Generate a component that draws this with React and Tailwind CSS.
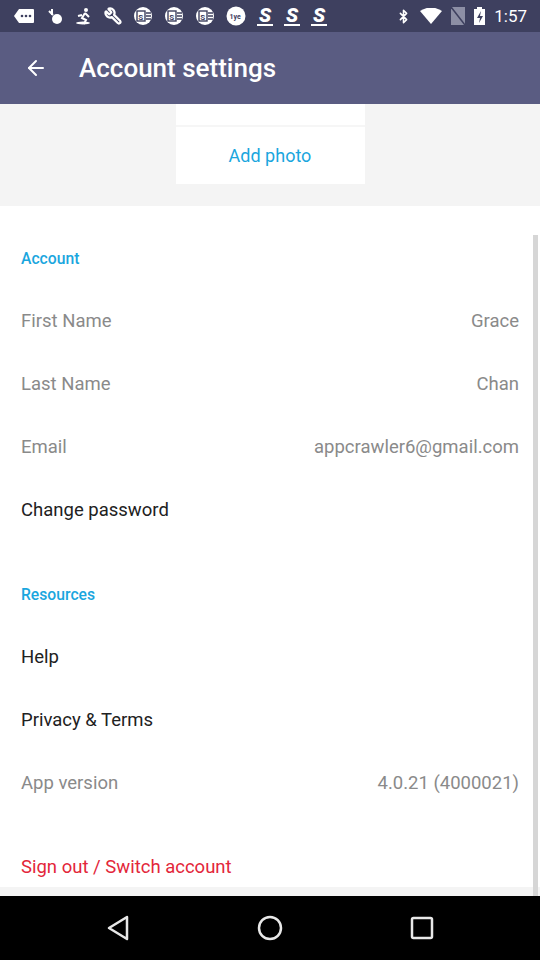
import React from "react";
import { ArrowLeft, Bluetooth, Wrench } from "lucide-react";

const font = { fontFamily: "Roboto, 'Noto Sans', sans-serif" };

function StatusBar() {
  return (
    <div className="h-[32px] bg-[#3e405f] flex items-center px-[13px] text-white">
      <div className="flex items-center gap-[11px]">
        {/* message bubble */}
        <svg width="22" height="16" viewBox="0 0 22 16">
          <path d="M6 1h14a1 1 0 011 1v12a1 1 0 01-1 1H6L1 8z" fill="white" />
          <circle cx="9" cy="8" r="1.3" fill="#3e405f" />
          <circle cx="13" cy="8" r="1.3" fill="#3e405f" />
          <circle cx="17" cy="8" r="1.3" fill="#3e405f" />
        </svg>
        <svg width="18" height="18" viewBox="0 0 18 18">
          <circle cx="11" cy="12" r="5" fill="white" />
          <path d="M3 4l4 4M6 2v6" stroke="white" strokeWidth="2" />
        </svg>
        <svg width="18" height="18" viewBox="0 0 18 18">
          <circle cx="11" cy="3" r="2" fill="white" />
          <path d="M10 6l-3 5 4 2-2 4M10 6l4 4M7 8l-4 1" stroke="white" strokeWidth="2" fill="none" />
          <ellipse cx="8" cy="16" rx="7" ry="1.5" fill="white" />
        </svg>
        <Wrench size={18} strokeWidth={3} className="-scale-x-100" />
        {[0, 1, 2].map((i) => (
          <svg key={i} width="20" height="20" viewBox="0 0 20 20">
            <circle cx="10" cy="10" r="9" fill="white" />
            <rect x="4" y="5" width="8" height="10" fill="none" stroke="#3e405f" strokeWidth="1.4" />
            <text x="5.3" y="13.5" fontSize="8" fontWeight="bold" fill="#3e405f" style={font}>S</text>
            <path d="M13 7h5M13 10h5M13 13h5" stroke="#3e405f" strokeWidth="1.3" />
          </svg>
        ))}
        <svg width="20" height="20" viewBox="0 0 20 20">
          <circle cx="10" cy="10" r="9.5" fill="white" />
          <text x="3.5" y="13" fontSize="7" fontWeight="bold" fill="#3e405f" style={font}>1ye</text>
        </svg>
        {[0, 1, 2].map((i) => (
          <div key={i} className="flex flex-col items-center leading-none">
            <span className="text-[20px] font-black italic leading-[18px]" style={font}>S</span>
            <span className="block w-[16px] h-[2px] bg-white" />
          </div>
        ))}
      </div>
      <div className="flex-1" />
      <div className="flex items-center gap-[9px]">
        <Bluetooth size={15} strokeWidth={2.5} />
        <svg width="22" height="16" viewBox="0 0 22 16">
          <path d="M0 3Q11 -4 22 3L11 16z" fill="white" />
        </svg>
        <svg width="14" height="18" viewBox="0 0 14 18">
          <rect x="0" y="0" width="14" height="18" fill="#8d8fa5" />
          <path d="M0 0l14 18" stroke="#3e405f" strokeWidth="1.6" />
        </svg>
        <svg width="11" height="18" viewBox="0 0 11 18">
          <rect x="3" y="0" width="5" height="2" fill="white" />
          <rect x="0" y="2" width="11" height="16" fill="white" />
          <path d="M7 4L3 11h3l-1 5 4-7H6z" fill="#3e405f" />
        </svg>
        <span className="text-[17px] leading-none" style={font}>1:57</span>
      </div>
    </div>
  );
}

function Row({ label, value, dark }) {
  return (
    <div className="h-[63px] flex items-center justify-between px-[21px] text-[18.5px]">
      <span className={dark ? "text-[#212121]" : "text-[#8a8a8a]"}>{label}</span>
      {value && <span className="text-[#8a8a8a]">{value}</span>}
    </div>
  );
}

function Header({ children }) {
  return (
    <div className="h-[63px] mt-[21px] first:mt-0 flex items-center px-[21px] text-[15.7px] font-medium text-[#1aa6de]">
      {children}
    </div>
  );
}

export default function App() {
  return (
    <div className="w-[540px] h-[960px] flex flex-col bg-[#f4f4f4] overflow-hidden" style={font}>
      <StatusBar />
      <div className="h-[72px] bg-[#5a5c82] flex items-center text-white">
        <ArrowLeft size={24} strokeWidth={2} className="ml-[24px]" />
        <h1 className="ml-[31px] text-[26px] font-medium">Account settings</h1>
      </div>

      <div className="relative flex-1 flex flex-col overflow-hidden">
        <div className="h-[102px] shrink-0 flex justify-center">
          <div className="w-[189px] h-[80px] bg-white flex flex-col">
            <div className="h-[23px] border-b-2 border-[#f6f6f6]" />
            <div className="flex-1 flex items-center justify-center text-[18px] text-[#1aa6de]">
              Add photo
            </div>
          </div>
        </div>

        <div className="bg-white pt-[21px] h-[681px] shrink-0 overflow-hidden">
          <Header>Account</Header>
          <Row label="First Name" value="Grace" />
          <Row label="Last Name" value="Chan" />
          <Row label="Email" value="appcrawler6@gmail.com" />
          <Row label="Change password" dark />
          <Header>Resources</Header>
          <Row label="Help" dark />
          <Row label="Privacy & Terms" dark />
          <Row label="App version" value="4.0.21 (4000021)" />
          <div className="h-[63px] mt-[21px] flex items-center px-[21px] text-[18.5px] text-[#e3263a]">
            Sign out / Switch account
          </div>
        </div>

        <div className="absolute right-[2px] top-[131px] bottom-0 w-[5px] bg-[#d6d6d6]" />
      </div>

      <div className="h-[64px] bg-black flex items-center px-[42px]">
        <div className="flex-1 flex justify-center">
          <svg width="24" height="26" viewBox="0 0 24 26">
            <path d="M21 2L3 13l18 11z" fill="none" stroke="#e8e8e8" strokeWidth="2.5" strokeLinejoin="round" />
          </svg>
        </div>
        <div className="flex-1 flex justify-center">
          <svg width="26" height="26" viewBox="0 0 26 26">
            <circle cx="13" cy="13" r="11" fill="none" stroke="#e8e8e8" strokeWidth="2.5" />
          </svg>
        </div>
        <div className="flex-1 flex justify-center">
          <svg width="24" height="24" viewBox="0 0 24 24">
            <rect x="2" y="2" width="20" height="20" rx="1.5" fill="none" stroke="#e8e8e8" strokeWidth="2.5" />
          </svg>
        </div>
      </div>
    </div>
  );
}
